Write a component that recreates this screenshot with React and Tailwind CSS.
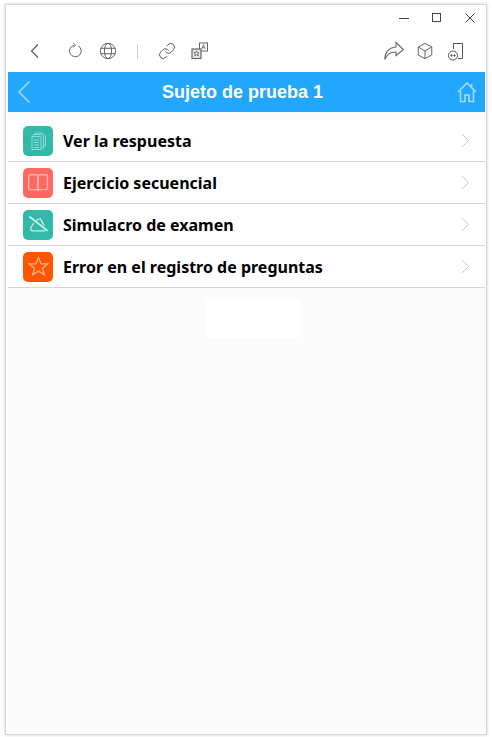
const rows = [
  { label: 'Ver la respuesta', color: 'bg-[#33b9a9]', icon: <DocsIcon /> },
  { label: 'Ejercicio secuencial', color: 'bg-[#ff695f]', icon: <BookIcon /> },
  { label: 'Simulacro de examen', color: 'bg-[#33b9a9]', icon: <ExamIcon /> },
  { label: 'Error en el registro de preguntas', color: 'bg-[#ff5500]', icon: <StarIcon /> },
];

function Svg({ size = 20, stroke = '#555', width = 1, className = '', children }) {
  return (
    <svg width={size} height={size} viewBox="0 0 20 20" fill="none" stroke={stroke} strokeWidth={width} className={className}>
      {children}
    </svg>
  );
}

function DocsIcon() {
  return (
    <Svg size={20} stroke="#8fdcd2">
      <path d="M7.500 3.500V2h7l3 3v10h-2" />
      <path d="M5.500 5V3.500h8l2 2V17h-2" />
      <path d="M4 5.500h8.500l.5.500V18.500H4z" />
      <path d="M6 9h5M6 11.500h5M6 14h5M6 16.500h5" />
    </Svg>
  );
}

function BookIcon() {
  return (
    <Svg size={22} stroke="#ffb3ad" width={1.3}>
      <path d="M2.500 2.500H8c1.300 0 2 .7 2 1.500v13c0-.6-.7-1-2-1H2.500c-.6 0-1-.4-1-1V3.500c0-.6.4-1 1-1z" />
      <path d="M17.500 2.500H12c-1.300 0-2 .7-2 1.500v13c0-.6.7-1 2-1h5.500c.6 0 1-.4 1-1V3.500c0-.6-.4-1-1-1z" />
    </Svg>
  );
}

function ExamIcon() {
  return (
    <Svg size={23} stroke="#cdeee9" width={1.1}>
      <path d="M2 3l16 12.500" strokeWidth="1.500" />
      <path d="M6 8.500l-2.500 4c-.8 1.700 0 3 1.600 3H16" />
      <path d="M7.500 6.500l4-1.500 3.500 6" />
    </Svg>
  );
}

function StarIcon() {
  return (
    <Svg size={21} stroke="#ffb48c" width={1.2}>
      <path d="M10 1.500l2.500 6h6.300l-5 4.100 1.800 6.400L10 14.400 4.400 18l1.800-6.400-5-4.100h6.300z" />
    </Svg>
  );
}

function RowArrow() {
  return (
    <svg width="9" height="15" viewBox="0 0 9 15" fill="none" stroke="#c8c8c8" strokeWidth="1">
      <path d="M1 1l6.500 6.500L1 14" />
    </svg>
  );
}

export default function App() {
  return (
    <div className="h-[737px] w-[492px] bg-white pt-[4px] pr-[5px] pb-[2px] pl-[5px]">
      <div className="flex h-full flex-col border border-[#d6d6d6] bg-white pr-[1px] pl-[2px] shadow-[0_0_3px_rgba(0,0,0,0.2)]">
        {/* window buttons */}
        <div className="flex h-[25px] items-center justify-end">
          <svg width="12" height="12" viewBox="0 0 12 12" stroke="#444" fill="none" className="mr-[21px]"><path d="M1 6.500h10" /></svg>
          <svg width="12" height="12" viewBox="0 0 12 12" stroke="#444" fill="none" className="mr-[21px]"><rect x="1.500" y="1.500" width="8" height="8" /></svg>
          <svg width="12" height="12" viewBox="0 0 12 12" stroke="#444" fill="none" className="mr-[9px]"><path d="M1.500 1.500l9 9M10.500 1.500l-9 9" /></svg>
        </div>

        {/* browser toolbar */}
        <div className="flex h-[42px] items-center pl-[17px] pr-[20px]">
          <Svg size={20} stroke="#555" width={1.1}><path d="M13 3.500 6.500 10l6.500 6.500" /></Svg>
          <Svg size={18} stroke="#555" className="ml-[22px]">
            <path d="M8 3.600a6.500 6.500 0 1 0 4.300.6" />
            <path d="M7 1l2.500 2.500L7 6" />
          </Svg>
          <Svg size={18} stroke="#555" className="ml-[14px]">
            <circle cx="10" cy="10" r="8.500" />
            <ellipse cx="10" cy="10" rx="4" ry="8.500" />
            <path d="M2 7h16M2 13h16" />
          </Svg>
          <div className="ml-[20px] mr-[20px] h-[15px] w-px bg-[#cfcfcf]" />
          <svg width="18" height="18" viewBox="0 0 24 24" fill="none" stroke="#555" strokeWidth="1.300" strokeLinecap="round">
            <path d="M10 13a5 5 0 0 0 7.540.54l3-3a5 5 0 0 0-7.070-7.070l-1.720 1.710" />
            <path d="M14 11a5 5 0 0 0-7.540-.54l-3 3a5 5 0 0 0 7.070 7.070l1.710-1.710" />
          </svg>
          <svg width="18" height="18" viewBox="0 0 18 18" fill="none" className="ml-[15px]">
            <rect x="8.500" y="1" width="8" height="8" stroke="#666" fill="#fff" />
            <path d="M10.800 7l1.700-4.500L14.200 7M11.300 5.600h2.400" stroke="#666" strokeWidth="0.8" />
            <rect x="1" y="7" width="9" height="9.500" stroke="#666" fill="#e6e6e6" strokeWidth="1.200" />
            <path d="M5.500 8.800l.8 1.800h1.800l-1.400 1.300.6 2-1.800-1.200-1.800 1.200.6-2-1.400-1.300h1.800z" stroke="#555" strokeWidth="0.7" />
          </svg>
          <div className="flex-1" />
          <svg width="20" height="20" viewBox="0 0 20 20" fill="none" stroke="#666" strokeWidth="1.100" className="mr-[-1px]">
            <path d="M12 1.500 19.500 8.500 12 14.500V11C7 10.800 3 13 1 18.500c-.8-6.500 3.500-11.800 11-12.500z" />
          </svg>
          <Svg size={18} stroke="#555" className="ml-[13px]">
            <path d="M10 1.500 17.500 5.500v9L10 18.500l-7.500-4v-9z" />
            <path d="M2.500 5.500 10 10l7.500-4.500M10 10v8.500" />
          </Svg>
          <svg width="18" height="20" viewBox="0 0 18 20" fill="none" stroke="#555" className="ml-[13px]">
            <path d="M6.500 8V2.500h9v15H11" />
            <circle cx="6" cy="14.500" r="4.500" />
            <circle cx="4.500" cy="14.500" r="0.700" fill="#555" />
            <circle cx="7.500" cy="14.500" r="0.700" fill="#555" />
          </svg>
        </div>

        {/* page */}
        <div className="flex min-h-0 flex-1 flex-col bg-[#fbfbfb]">
          <header className="flex h-10 items-center justify-between bg-[#22a7ff] pl-[9px] pr-[8px]">
            <svg width="14" height="24" viewBox="0 0 14 24" fill="none" stroke="#a5dcff" strokeWidth="1.500"><path d="M12.500 1.500 2 12l10.500 10.500" /></svg>
            <h1 className="ml-[-3px] text-[18px] font-bold text-white [font-family:'Liberation_Sans',Arial,sans-serif]">Sujeto de prueba 1</h1>
            <svg width="20" height="22" viewBox="0 0 20 22" fill="none" stroke="#a5dcff" strokeWidth="1.600">
              <path d="M1 11 10 2l9 9" />
              <path d="M3.500 9.500V20.500h4.500v-6.500h4v6.500h4.500V9.500" />
              <path d="M14.500 3v3" />
            </svg>
          </header>

          <ul className="mt-2 bg-white">
            {rows.map((row) => (
              <li key={row.label} className="flex h-[42px] items-center border-b border-[#d5d5d5] pl-[15px] pr-[15px]">
                <span className={`flex h-[30px] w-[30px] items-center justify-center rounded-[5px] ${row.color}`}>{row.icon}</span>
                <span className="ml-[10px] flex-1 text-[16px] font-bold text-black [font-family:'Noto_Sans',sans-serif]">{row.label}</span>
                <RowArrow />
              </li>
            ))}
          </ul>

          <div className="mt-[11px] ml-[198px] h-[39px] w-[94px] rounded-[3px] bg-white" />
        </div>
      </div>
    </div>
  );
}
